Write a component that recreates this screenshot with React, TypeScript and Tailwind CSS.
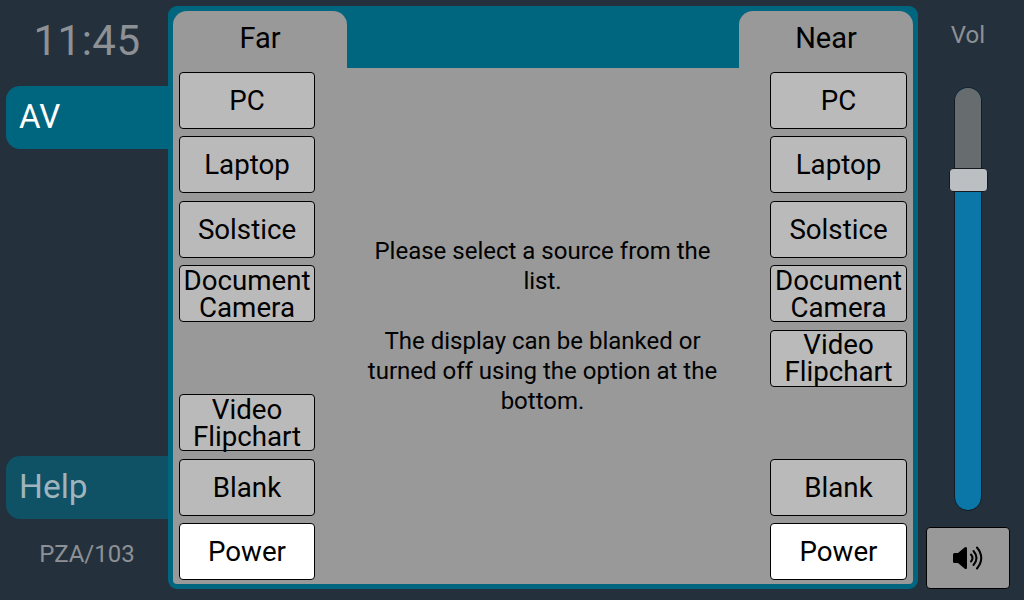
import React from 'react';

const farSources = ['PC', 'Laptop', 'Solstice', 'Document Camera', '', 'Video Flipchart', 'Blank', 'Power'];
const nearSources = ['PC', 'Laptop', 'Solstice', 'Document Camera', 'Video Flipchart', '', 'Blank', 'Power'];

const SourceButton: React.FC<{ label: string }> = ({ label }) => {
  if (!label) return <div className="h-[57px]" />;
  return (
    <button
      className={`h-[57px] w-full rounded-[4px] border border-black text-black text-[27.7px] leading-[27px] flex items-center justify-center text-center ${
        label === 'Power' ? 'bg-white' : 'bg-[#bababa]'
      }`}
    >
      <span className="block">{label}</span>
    </button>
  );
};

const SourceColumn: React.FC<{ items: string[]; width: string }> = ({ items, width }) => (
  <div className={`${width} flex flex-col gap-[7.43px]`}>
    {items.map((item, i) => (
      <SourceButton key={i} label={item} />
    ))}
  </div>
);

const VolumeIcon = () => (
  <svg width="31" height="24" viewBox="0 0 31 24" fill="none" className="text-black">
    <path
      d="M0 8.5Q0 7 1.5 7H5L11.5 1.5Q14 0 14 2.5V21.5Q14 24 11.5 22.5L5 17H1.5Q0 17 0 15.5Z"
      fill="currentColor"
    />
    <path d="M18 8.5Q21 12 18 15.5" stroke="currentColor" strokeWidth="2" strokeLinecap="round" />
    <path d="M20.5 5Q26.5 12 20.5 19" stroke="currentColor" strokeWidth="2" strokeLinecap="round" />
    <path d="M24 1.5Q32.5 12 24 22.5" stroke="currentColor" strokeWidth="2" strokeLinecap="round" />
  </svg>
);

export default function App() {
  return (
    <div className="w-[1024px] h-[600px] bg-[#24303b] flex overflow-hidden font-['Roboto',sans-serif]">
      {/* Left: clock + nav */}
      <div className="w-[168px] shrink-0 flex flex-col pl-[6px] pt-[15px]">
        <div className="text-[42px] leading-[52px] text-[#8d9196] text-center tracking-[0.5px] w-[162px]">11:45</div>
        <div className="mt-[19px] h-[63px] bg-[#00657f] rounded-l-[14px] flex items-center pl-[13px] pb-[2px] text-[33px] text-white">AV</div>
        <div className="flex-1" />
        <div className="h-[63px] bg-[#0f5165] rounded-l-[14px] flex items-center pl-[13px] text-[33.5px] text-[#9fb4bc]">Help</div>
        <div className="h-[81px] pb-[12px] flex items-center justify-center text-[24px] text-[#8d9196] w-[162px]">PZA/103</div>
      </div>

      {/* Center panel */}
      <div className="w-[750px] h-[583px] mt-[6px] shrink-0 bg-[#00657f] rounded-[9px] p-[5px]">
        <div className="h-[573px] flex flex-col">
          <div className="h-[57px] flex justify-between">
            <div className="w-[174px] bg-[#999999] rounded-t-[14px] flex items-center justify-center pb-[2px] text-[29px] text-black">Far</div>
            <div className="w-[174px] bg-[#999999] rounded-t-[14px] flex items-center justify-center pb-[2px] text-[29px] text-black">Near</div>
          </div>
          <div className="flex-1 bg-[#999999] rounded-b-[4px] flex justify-between pl-[6px] pr-[6px] pt-[4px]">
            <SourceColumn items={farSources} width="w-[136px]" />
            <div className="w-[360px] flex items-center justify-center text-center text-[24px] leading-[30px] text-black pb-[4px]">
              <div>
                Please select a source from the list.
                <br />
                <br />
                The display can be blanked or turned off using the option at the bottom.
              </div>
            </div>
            <SourceColumn items={nearSources} width="w-[137px]" />
          </div>
        </div>
      </div>

      {/* Right: volume */}
      <div className="flex-1 flex flex-col items-center pt-[20px] pr-[6px]">
        <div className="text-[24px] leading-[30px] text-[#8d9196]">Vol</div>
        <div className="relative mt-[37px] w-[28px] h-[424px] shrink-0 rounded-[14px] border border-[#141a20] bg-[#0b76a8]">
          <div className="h-[84px] rounded-t-[14px] bg-[#676c6f]" />
          <div className="absolute left-[-6px] top-[80px] w-[39px] h-[24px] rounded-[4px] border border-[#141a20] bg-[#bbbfc2]" />
        </div>
        <button className="mt-[16px] w-[84px] h-[62px] shrink-0 rounded-[4px] border border-black bg-[#999999] flex items-center justify-center">
          <VolumeIcon />
        </button>
      </div>
    </div>
  );
}
